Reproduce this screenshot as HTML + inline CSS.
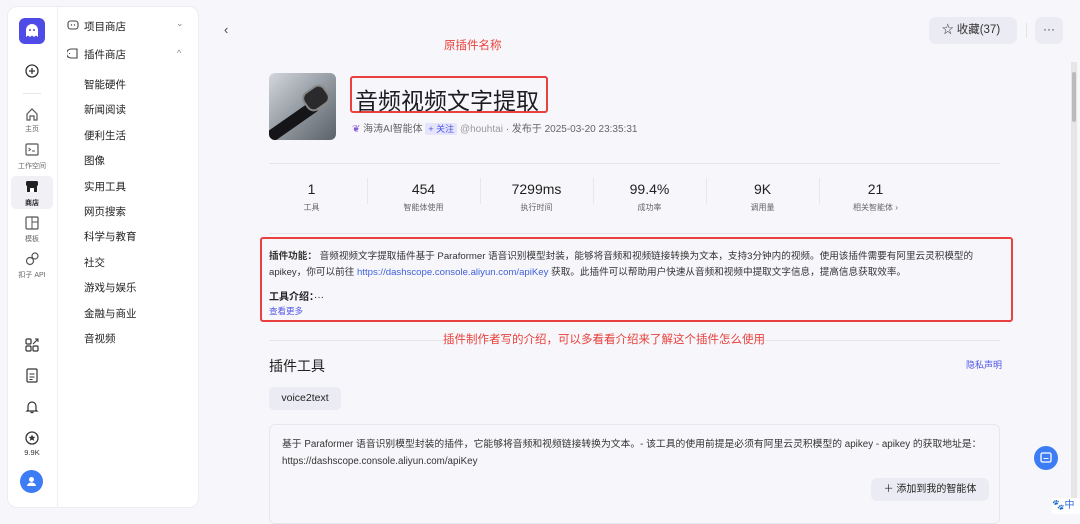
<!DOCTYPE html>
<html><head><meta charset="utf-8"><style>
*{box-sizing:border-box;margin:0;padding:0}
body{width:1080px;height:514px;overflow:hidden;background:#f7f7fb;font-family:"Liberation Sans","Noto Sans CJK SC",sans-serif;color:#1d1c23;position:relative}
.a{position:absolute}
.side{left:7px;top:6px;width:192px;height:502px;background:#fff;border-radius:10px;border:1px solid #ececf2}
.vl{left:57px;top:6px;width:1px;height:502px;background:#efeff3}
.ic{width:52px;text-align:center;font-size:7px;color:#666}
.menu{font-size:10.5px;color:#222}
.stat{width:113px;text-align:center}
.stat b{display:block;font-weight:normal;font-size:14px;color:#222}
.stat span{font-size:8px;color:#666}
.sd{width:1px;height:26px;background:#e6e6ec;top:178px}
</style></head><body>
<div class="a side"></div>
<div class="a vl"></div>
<div class="a" style="left:19px;top:18px;width:26px;height:26px;border-radius:6px;background:#4e4be6"><svg width="26" height="26"><path d="M7 19V12a6 6 0 0 1 12 0v7l-2-1.5-2 1.5-2-1.5-2 1.5-2-1.5z" fill="#fff"/><circle cx="11" cy="12" r="1" fill="#4e4be6"/><circle cx="15" cy="12" r="1" fill="#4e4be6"/></svg></div>
<svg class="a" style="left:25px;top:64px" width="14" height="14"><circle cx="7" cy="7" r="6" fill="none" stroke="#333" stroke-width="1.3"/><path d="M7 4v6M4 7h6" stroke="#333" stroke-width="1.3"/></svg>
<div class="a" style="left:23px;top:93px;width:18px;height:1px;background:#e5e5ea"></div>
<svg class="a" style="left:25px;top:107px" width="14" height="14"><path d="M2 7l5-5 5 5v6H9V9H5v4H2z" fill="none" stroke="#555" stroke-width="1.2"/></svg>
<div class="a ic" style="left:6px;top:124px">主页</div>
<svg class="a" style="left:25px;top:143px" width="14" height="13"><rect x="1" y="1" width="12" height="11" rx="1" fill="none" stroke="#555" stroke-width="1.2"/><path d="M3.5 5l2 1.5-2 1.5M7 8h3" stroke="#555" fill="none"/></svg>
<div class="a ic" style="left:6px;top:161px">工作空间</div>
<div class="a" style="left:11px;top:176px;width:42px;height:33px;background:#f0f0f5;border-radius:5px"></div>
<svg class="a" style="left:25px;top:180px" width="14" height="13"><rect x="1" y="1" width="12" height="5" rx="1.5" fill="#222"/><rect x="2" y="6" width="10" height="6" fill="#222"/><rect x="5" y="8" width="4" height="4" fill="#fff"/></svg>
<div class="a ic" style="left:6px;top:198px;color:#222;font-weight:bold">商店</div>
<svg class="a" style="left:25px;top:216px" width="14" height="14"><rect x="1" y="1" width="12" height="12" rx="1" fill="none" stroke="#555" stroke-width="1.2"/><path d="M7 1v12M7 6h6" stroke="#555"/></svg>
<div class="a ic" style="left:6px;top:234px">模板</div>
<svg class="a" style="left:25px;top:252px" width="14" height="14"><circle cx="5" cy="9" r="3.5" fill="none" stroke="#555" stroke-width="1.2"/><circle cx="10" cy="4" r="3" fill="none" stroke="#555" stroke-width="1.2"/></svg>
<div class="a ic" style="left:6px;top:270px">扣子 API</div>
<svg class="a" style="left:25px;top:338px" width="14" height="14"><rect x="1" y="1" width="5" height="5" rx="1" fill="none" stroke="#333" stroke-width="1.2"/><rect x="1" y="8" width="5" height="5" rx="1" fill="none" stroke="#333" stroke-width="1.2"/><rect x="8" y="8" width="5" height="5" rx="1" fill="none" stroke="#333" stroke-width="1.2"/><path d="M8 6l5-5M10 1h3v3" stroke="#333" fill="none"/></svg>
<svg class="a" style="left:26px;top:368px" width="12" height="15"><rect x="1" y="1" width="10" height="13" rx="1" fill="none" stroke="#333" stroke-width="1.2"/><path d="M3.5 6h5M3.5 9h5M3.5 11.5h3" stroke="#333"/></svg>
<svg class="a" style="left:25px;top:399px" width="14" height="15"><path d="M3 11V7a4 4 0 0 1 8 0v4l1 1H2z M5.5 13.5h3" fill="none" stroke="#333" stroke-width="1.2"/></svg>
<svg class="a" style="left:25px;top:431px" width="14" height="14"><circle cx="7" cy="7" r="6" fill="none" stroke="#333" stroke-width="1.3"/><path d="M7 3.5l1 2.2 2.4.2-1.8 1.6.6 2.4L7 8.6 4.8 9.9l.6-2.4-1.8-1.6 2.4-.2z" fill="#333"/></svg>
<div class="a ic" style="left:6px;top:448px;font-size:7.5px;color:#333">9.9K</div>
<div class="a" style="left:20px;top:470px;width:23px;height:23px;border-radius:50%;background:#3c7cf5"><svg width="23" height="23"><circle cx="11.5" cy="9.5" r="2.5" fill="#fff"/><path d="M7 16a4.5 3.5 0 0 1 9 0z" fill="#fff"/></svg></div>
<svg class="a" style="left:67px;top:20px" width="12" height="11"><rect x="1" y="1" width="10" height="8" rx="2.5" fill="none" stroke="#444" stroke-width="1.1"/><circle cx="4.5" cy="5" r=".7" fill="#444"/><circle cx="7.5" cy="5" r=".7" fill="#444"/></svg>
<div class="a menu" style="left:84px;top:19px">项目商店</div>
<div class="a" style="left:176px;top:18px;font-size:9px;color:#888">⌄</div>
<svg class="a" style="left:67px;top:48px" width="12" height="11"><path d="M4 1h6v9H4a4.5 4.5 0 0 1 0-9z M2 5.5h1" fill="none" stroke="#444" stroke-width="1.1"/></svg>
<div class="a menu" style="left:84px;top:47px">插件商店</div>
<div class="a" style="left:177px;top:48px;font-size:9px;color:#888">^</div>
<div class="a menu" style="left:84px;top:73px;line-height:25.4px">智能硬件<br>新闻阅读<br>便利生活<br>图像<br>实用工具<br>网页搜索<br>科学与教育<br>社交<br>游戏与娱乐<br>金融与商业<br>音视频</div>

<div class="a" style="left:224px;top:22px;font-size:13px;color:#444">‹</div>
<div class="a" style="left:444px;top:37px;font-size:11.5px;color:#e8413c">原插件名称</div>
<div class="a" style="left:929px;top:17px;width:88px;height:27px;background:#ebebf3;border-radius:7px;font-size:11.5px;color:#333;line-height:27px;padding-left:13px">☆ 收藏(37)</div>
<div class="a" style="left:1026px;top:23px;width:1px;height:15px;background:#e2e2e8"></div>
<div class="a" style="left:1035px;top:17px;width:28px;height:27px;background:#ebebf3;border-radius:7px;font-size:12px;color:#444;line-height:25px;text-align:center">···</div>
<div class="a" style="left:1071px;top:62px;width:6px;height:452px;background:#e6e6e6"><div style="margin:10px 1px;height:50px;background:#bbb;border-radius:2px"></div></div>

<div class="a" style="left:269px;top:73px;width:67px;height:67px;border-radius:6px;background:linear-gradient(135deg,#d4d7dc,#8d949c 55%,#5b6168);overflow:hidden"><div style="position:absolute;left:-6px;top:42px;width:60px;height:12px;background:#151517;transform:rotate(-35deg);border-radius:6px"></div><div style="position:absolute;left:34px;top:14px;width:26px;height:22px;border-radius:8px;background:#2a2a2c;border:2px solid #888;transform:rotate(-35deg)"></div></div>
<div class="a" style="left:350px;top:76px;width:198px;height:37px;border:2px solid #e94040;border-radius:3px"></div>
<div class="a" style="left:355px;top:82px;font-size:23px;color:#1d1c23">音频视频文字提取</div>
<div class="a" style="left:352px;top:120px;font-size:10px;color:#666;white-space:nowrap"><span style="color:#8a5ad5">❦</span> 海涛AI智能体 <span style="background:#e4e4fc;color:#4d53e8;padding:1px 3px;border-radius:2px;font-size:9px">+ 关注</span> <span style="color:#999">@houhtai</span> · 发布于 2025-03-20 23:35:31</div>
<div class="a" style="left:269px;top:163px;width:731px;height:1px;background:#e5e5ea"></div>
<div class="a stat" style="left:255px;top:181px"><b>1</b><span>工具</span></div>
<div class="a stat" style="left:367px;top:181px"><b>454</b><span>智能体使用</span></div>
<div class="a stat" style="left:480px;top:181px"><b>7299ms</b><span>执行时间</span></div>
<div class="a stat" style="left:593px;top:181px"><b>99.4%</b><span>成功率</span></div>
<div class="a stat" style="left:706px;top:181px"><b>9K</b><span>调用量</span></div>
<div class="a stat" style="left:819px;top:181px"><b>21</b><span>相关智能体 ›</span></div>
<div class="a sd" style="left:367px"></div><div class="a sd" style="left:480px"></div><div class="a sd" style="left:593px"></div><div class="a sd" style="left:706px"></div><div class="a sd" style="left:819px"></div>
<div class="a" style="left:269px;top:233px;width:731px;height:1px;background:#e5e5ea"></div>
<div class="a" style="left:260px;top:237px;width:753px;height:85px;border:2px solid #e94040;border-radius:3px"></div>
<div class="a" style="left:269px;top:249px;width:730px;font-size:9.6px;line-height:16px;color:#333"><b>插件功能：</b> 音频视频文字提取插件基于 Paraformer 语音识别模型封装，能够将音频和视频链接转换为文本，支持3分钟内的视频。使用该插件需要有阿里云灵积模型的 apikey，你可以前往 <span style="color:#3f5fd8">https://dashscope.console.aliyun.com/apiKey</span> 获取。此插件可以帮助用户快速从音频和视频中提取文字信息，提高信息获取效率。</div>
<div class="a" style="left:269px;top:288px;font-size:10px;font-weight:bold;color:#222">工具介绍：<span style="font-weight:normal">···</span></div>
<div class="a" style="left:269px;top:305px;font-size:8.5px;color:#4d53e8">查看更多</div>
<div class="a" style="left:269px;top:340px;width:731px;height:1px;background:#e5e5ea"></div>
<div class="a" style="left:443px;top:331px;font-size:11.5px;color:#e8413c;background:#f7f7fb">插件制作者写的介绍，可以多看看介绍来了解这个插件怎么使用</div>
<div class="a" style="left:269px;top:356px;font-size:14px;color:#222">插件工具</div>
<div class="a" style="left:966px;top:358px;font-size:9px;color:#4d53e8">隐私声明</div>
<div class="a" style="left:269px;top:387px;width:72px;height:23px;background:#ebebf3;border-radius:5px;font-size:10.5px;line-height:23px;text-align:center;color:#222">voice2text</div>
<div class="a" style="left:269px;top:424px;width:731px;height:100px;border:1px solid #e6e6ee;border-radius:6px"></div>
<div class="a" style="left:282px;top:436px;width:710px;font-size:9.8px;line-height:17px;color:#333">基于 Paraformer 语音识别模型封装的插件，它能够将音频和视频链接转换为文本。- 该工具的使用前提是必须有阿里云灵积模型的 apikey - apikey 的获取地址是：https://dashscope.console.aliyun.com/apiKey</div>
<div class="a" style="left:871px;top:478px;width:118px;height:23px;background:#ebebf3;border-radius:6px;font-size:10px;line-height:23px;text-align:center;color:#222">＋ 添加到我的智能体</div>
<div class="a" style="left:1034px;top:446px;width:24px;height:24px;border-radius:50%;background:#3c7cf5"><svg width="24" height="24"><rect x="7" y="7" width="10" height="9" rx="1.5" fill="none" stroke="#fff" stroke-width="1.3"/><path d="M9.5 12.5h5" stroke="#fff"/></svg></div>
<div class="a" style="left:1052px;top:498px;width:28px;height:16px;background:#fff;font-size:10px;color:#2f6be0;line-height:16px">🐾中</div>
</body></html>
